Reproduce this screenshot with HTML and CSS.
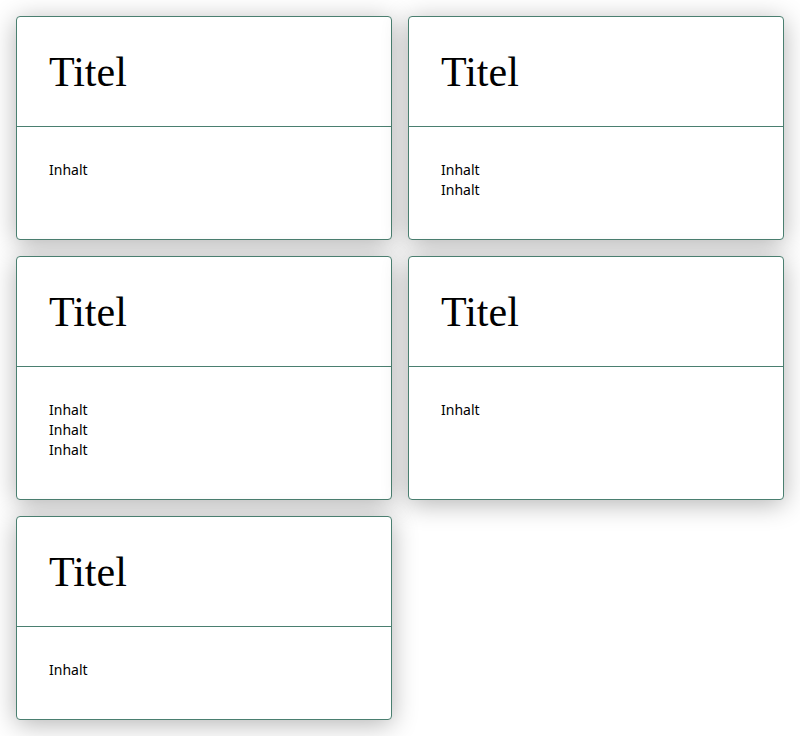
FILE: index.html
```html
<!DOCTYPE html>
<html lang="de">
<head>
<meta charset="utf-8">
<title>Karten</title>
<link rel="stylesheet" href="styles.css">
</head>
<body>
<main class="grid">
  <section class="card">
    <header class="card-head"><h2 class="card-title">Titel</h2></header>
    <div class="card-body"><p class="line">Inhalt</p></div>
  </section>
  <section class="card">
    <header class="card-head"><h2 class="card-title">Titel</h2></header>
    <div class="card-body"><p class="line">Inhalt</p><p class="line">Inhalt</p></div>
  </section>
  <section class="card">
    <header class="card-head"><h2 class="card-title">Titel</h2></header>
    <div class="card-body"><p class="line">Inhalt</p><p class="line">Inhalt</p><p class="line">Inhalt</p></div>
  </section>
  <section class="card">
    <header class="card-head"><h2 class="card-title">Titel</h2></header>
    <div class="card-body"><p class="line">Inhalt</p></div>
  </section>
  <section class="card">
    <header class="card-head"><h2 class="card-title">Titel</h2></header>
    <div class="card-body"><p class="line">Inhalt</p></div>
  </section>
</main>
</body>
</html>
```

FILE: styles.css
```css
html, body {
  margin: 0;
  padding: 0;
  background: #ffffff;
}

body {
  font-family: "Noto Sans", "DejaVu Sans", sans-serif;
  color: #000;
}

.grid {
  display: grid;
  grid-template-columns: 376px 376px;
  gap: 16px;
  padding: 16px;
}

.card {
  display: flex;
  flex-direction: column;
  background: #fff;
  border: 1px solid #4a7f70;
  border-radius: 4px;
  box-shadow: 0 4px 26px rgba(0, 0, 0, 0.3);
}

.card-head {
  border-bottom: 1px solid #4a7f70;
  padding: 0 32px;
  box-sizing: border-box;
  height: 110px;
}

.card-title {
  margin: 0;
  padding-top: 30px;
  font-family: "Liberation Serif", "DejaVu Serif", serif;
  font-weight: normal;
  font-size: 42px;
  line-height: 50px;
}

.card-body {
  flex: 1;
  padding: 33px 32px 39px;
}

.line {
  margin: 0;
  font-size: 14px;
  line-height: 20px;
}
```
